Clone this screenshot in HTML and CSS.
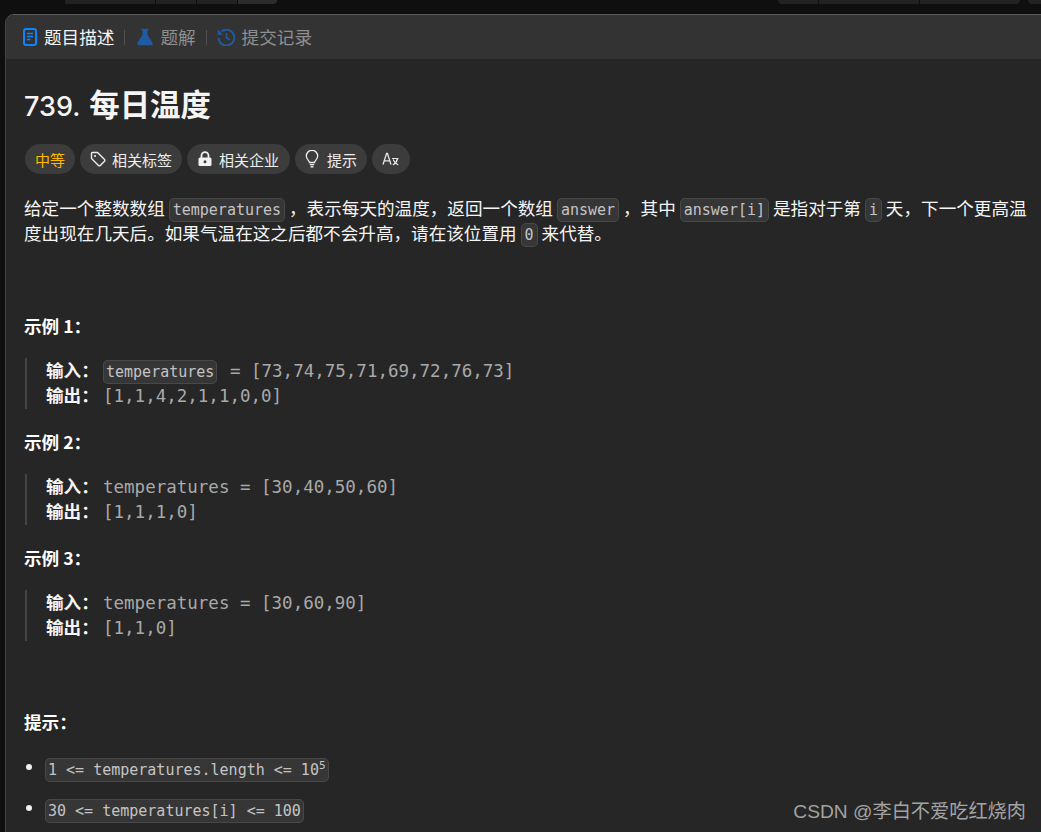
FILE: index.html
```html
<!DOCTYPE html>
<html lang="zh-CN">
<head>
  <meta charset="UTF-8" />
  <meta name="viewport" content="width=device-width, initial-scale=1.0" />
  <title>739. 每日温度</title>
  <link rel="stylesheet" href="styles.css">
</head>
<body>

  <!-- top bar remains -->
  <div class="top-strip">
    <div class="strip-group strip-left">
      <span class="strip-piece wide"></span>
      <span class="strip-piece"></span>
      <span class="strip-piece"></span>
      <span class="strip-piece narrow"></span>
    </div>
    <div class="strip-group strip-right">
      <span class="strip-piece short"></span>
      <span class="strip-piece long"></span>
      <span class="strip-piece long"></span>
    </div>
    <div class="strip-group strip-end"></div>
  </div>

  <div class="panel">
    <!-- TABS -->
    <div class="tabs">
      <div class="tab active">
        <svg class="tab-icon" viewBox="0 0 14 18" width="14" height="18">
          <rect x="1" y="1" width="12" height="16" rx="2.2" fill="none" stroke="#0a84ff" stroke-width="2"/>
          <path d="M4 5.5h6M4 8.5h6M4 11.5h3.5" stroke="#0a84ff" stroke-width="1.6"/>
        </svg>
        <span>题目描述</span>
      </div>
      <div class="tab-sep"></div>
      <div class="tab">
        <svg class="tab-icon" viewBox="0 0 16 18" width="16" height="18">
          <path d="M4.500 .8h7v1.500h-1v4.500l5 8c.6 1.100-.1 2.400-1.300 2.400H1.800C.6 17.200-.1 15.900.5 14.800l5-8V2.300h-1z" fill="#1f5ba3"/>
        </svg>
        <span>题解</span>
      </div>
      <div class="tab-sep"></div>
      <div class="tab tab-last">
        <svg class="tab-icon" viewBox="0 0 18 18" width="18" height="18">
          <path d="M4.300 3.600A7.900 7.900 0 1 1 1.500 10" fill="none" stroke="#1f5ba3" stroke-width="1.900"/>
          <path d="M.8 1.600v5.200H6z" fill="#1f5ba3"/>
          <path d="M9.500 5v4.800l3.200 2" fill="none" stroke="#1f5ba3" stroke-width="1.800"/>
        </svg>
        <span>提交记录</span>
      </div>
    </div>

    <div class="content">
      <h1 class="title"><span class="num">739.</span> 每日温度</h1>

      <div class="chips">
        <div class="chip level">中等</div>
        <div class="chip">
          <svg viewBox="0 0 16 16" width="16" height="16">
            <path d="M1.500 2.500a1 1 0 0 1 1-1h5l7 7a1.200 1.200 0 0 1 0 1.700l-4.300 4.300a1.200 1.200 0 0 1-1.700 0l-7-7z" fill="none" stroke="#eee" stroke-width="1.400"/>
            <circle cx="5" cy="5" r="1.100" fill="#eee"/>
          </svg>
          相关标签
        </div>
        <div class="chip chip-lock">
          <svg viewBox="0 0 16 16" width="16" height="16">
            <path d="M4.500 7V4.600a3.500 3.500 0 0 1 7 0V7" fill="none" stroke="#f2f2f2" stroke-width="1.800"/>
            <rect x="1.500" y="6.500" width="13" height="8.500" rx="1.500" fill="#f2f2f2"/>
            <circle cx="8" cy="10.800" r="1.500" fill="#3c3c3c"/>
          </svg>
          相关企业
        </div>
        <div class="chip chip-hint">
          <svg viewBox="0 0 14 18" width="14" height="18">
            <path d="M4.500 12.500c0-1.800-3.200-3-3.200-6.500a5.700 5.700 0 0 1 11.400 0c0 3.500-3.200 4.700-3.200 6.500z" fill="none" stroke="#eee" stroke-width="1.300"/>
            <path d="M4.800 14.600h4.400M5.600 16.800h2.800" stroke="#eee" stroke-width="1.400"/>
          </svg>
          提示
        </div>
        <div class="chip">
          <svg viewBox="0 0 18 17" width="18" height="17">
            <path d="M1 13.500 4.600 2.500h.8L9 13.500M2.300 9.800h5.400" fill="none" stroke="#e6e6e6" stroke-width="1.300"/>
            <path d="M10 7.500h6.500M15.600 7.500c-.6 2.800-2.200 5-4.700 6.500M11.200 8.500c.9 2.500 2.600 4.400 5.100 5.500" fill="none" stroke="#e6e6e6" stroke-width="1.200"/>
          </svg>
        </div>
      </div>

      <p class="desc">给定一个整数数组 <code>temperatures</code> ，表示每天的温度，返回一个数组 <code>answer</code> ，其中 <code>answer[i]</code> 是指对于第 <code>i</code> 天，下一个更高温度出现在几天后。如果气温在这之后都不会升高，请在该位置用 <code>0</code> 来代替。</p>

      <div class="sample first-sample">
        <div class="sample-title">示例 1：</div>
        <div class="sample-body">
          <div class="sample-row"><b>输入：</b><span><code class="in-pre">temperatures</code> = [73,74,75,71,69,72,76,73]</span></div>
          <div class="sample-row"><b>输出：</b><span>[1,1,4,2,1,1,0,0]</span></div>
        </div>
      </div>

      <div class="sample">
        <div class="sample-title">示例 2：</div>
        <div class="sample-body">
          <div class="sample-row"><b>输入：</b><span>temperatures = [30,40,50,60]</span></div>
          <div class="sample-row"><b>输出：</b><span>[1,1,1,0]</span></div>
        </div>
      </div>

      <div class="sample">
        <div class="sample-title">示例 3：</div>
        <div class="sample-body">
          <div class="sample-row"><b>输入：</b><span>temperatures = [30,60,90]</span></div>
          <div class="sample-row"><b>输出：</b><span>[1,1,0]</span></div>
        </div>
      </div>

      <div class="hints-title">提示：</div>
      <ul class="hints">
        <li><code>1 &lt;= temperatures.length &lt;= 10<sup>5</sup></code></li>
        <li><code>30 &lt;= temperatures[i] &lt;= 100</code></li>
      </ul>
    </div>
  </div>

  <div class="watermark">CSDN @李白不爱吃红烧肉</div>

</body>
</html>
```

FILE: styles.css
```css
html, body {
  height: 100%;
}

body {
  margin: 0;
  height: 832px;
  overflow: hidden;
  position: relative;
  background: #0f0f0f;
  color: #fff;
  font-family: "Noto Sans CJK SC", "Noto Sans", sans-serif;
  font-size: 17.6px;
}

.top-strip {
  display: flex;
  height: 4px;
  padding-left: 65px;
}

.strip-group {
  display: flex;
  gap: 1px;
  background: #0f0f0f;
}

.strip-left { width: 213px; }
.strip-right { margin-left: 500px; width: 242px; }
.strip-end { margin-left: 8px; flex: 1; background: #222; border-bottom-left-radius: 4px; }

.strip-piece {
  background: #222;
  width: 90px;
}

.strip-left .strip-piece { width: 40px; }
.strip-left .strip-piece.wide { width: 90px; }
.strip-left .strip-piece.narrow { width: 39px; background: #2c2c2c; border-bottom-right-radius: 4px; }
.strip-right .strip-piece.short { width: 40px; border-bottom-left-radius: 4px; }
.strip-right .strip-piece.long { width: 100px; }
.strip-right .strip-piece.long:last-child { border-bottom-right-radius: 4px; }

.panel {
  margin: 10px 0 0 5px;
  height: 818px;
  background: #262626;
  border-top: 1px solid #5c5c5c;
  border-left: 1px solid #444;
  border-top-left-radius: 9px;
  overflow: hidden;
}

.tabs {
  display: flex;
  align-items: center;
  height: 44px;
  padding-left: 17px;
  background: #333;
  color: #8f8f8f;
}

.tab {
  display: flex;
  align-items: center;
  gap: 7px;
  line-height: 44px;
}

.tab.active {
  color: #f5f5f5;
}

.tab-last {
  margin-left: -2px;
}

.tab-icon {
  flex: none;
}

.tab-sep {
  width: 1px;
  height: 15px;
  margin: 0 12px 0 10px;
  background: #505050;
}

.content {
  padding: 0 0 0 18px;
  width: 1030px;
}

.title {
  margin: 24px 0 0;
  height: 40px;
  font-size: 30.4px;
  line-height: 40px;
  font-weight: 700;
  color: #f5f5f5;
}

.title .num {
  margin-right: 2px;
  font-weight: 500;
  font-family: "Inter", "Noto Sans", sans-serif;
  font-size: 27px;
}

.chips {
  display: flex;
  gap: 5px;
  margin: 21px 0 0 1px;
}

.chip {
  display: flex;
  align-items: center;
  gap: 6px;
  height: 30px;
  padding: 0 10px;
  border-radius: 15px;
  background: #3c3c3c;
  color: #eee;
  font-size: 15px;
}

.chip.level {
  color: #ffb800;
}

.chip-lock {
  padding-right: 11px;
}

.chip-hint {
  gap: 8px;
}

.desc {
  margin: 21px 0 0;
  width: 1005px;
  line-height: 25px;
  color: #f5f5f5;
}

code {
  font-family: "DejaVu Sans Mono", monospace;
  font-size: 15px;
  line-height: 20px;
  padding: 2px 3px;
  border: 1px solid #484848;
  border-radius: 5px;
  background: #363636;
  color: #c4c4c4;
}

.sample-title, .hints-title {
  font-size: 17.6px;
  font-weight: 700;
  line-height: 24px;
}

.sample {
  margin-top: 21px;
}

.first-sample {
  margin-top: 69px;
}

.sample-body {
  margin: 20px 0 0 1px;
  padding-left: 19px;
  border-left: 2px solid #444;
  font-family: "DejaVu Sans Mono", monospace;
  font-size: 17.5px;
  height: 51px;
  color: #a9a9a9;
}

.sample-row {
  display: flex;
  align-items: baseline;
  height: 25px;
  line-height: 23px;
}

.sample-row b {
  width: 57px;
  flex: none;
  color: #f5f5f5;
  font-family: "Noto Sans CJK SC", sans-serif;
  font-size: 17.6px;
}

.in-pre {
  padding: 2px 2px;
  margin-right: 2px;
  font-size: 15px;
}

.hints-title {
  margin-top: 69px;
}

.hints {
  margin: 21px 0 0;
  padding: 0 0 0 21px;
  list-style: none;
}

.hints li {
  position: relative;
  margin-bottom: 16px;
  line-height: 25px;
}

.hints li::before {
  content: "";
  position: absolute;
  left: -19px;
  top: 9px;
  width: 6px;
  height: 6px;
  border-radius: 50%;
  background: #f0f0f0;
}

.hints code {
  padding: 2px 2px;
}

sup {
  font-size: 11px;
  line-height: 0;
}

.watermark {
  position: absolute;
  right: 15px;
  top: 800px;
  font-family: "Liberation Sans", "Noto Sans CJK SC", sans-serif;
  font-size: 19.2px;
  line-height: 24px;
  color: #a3a3a3;
}
```
